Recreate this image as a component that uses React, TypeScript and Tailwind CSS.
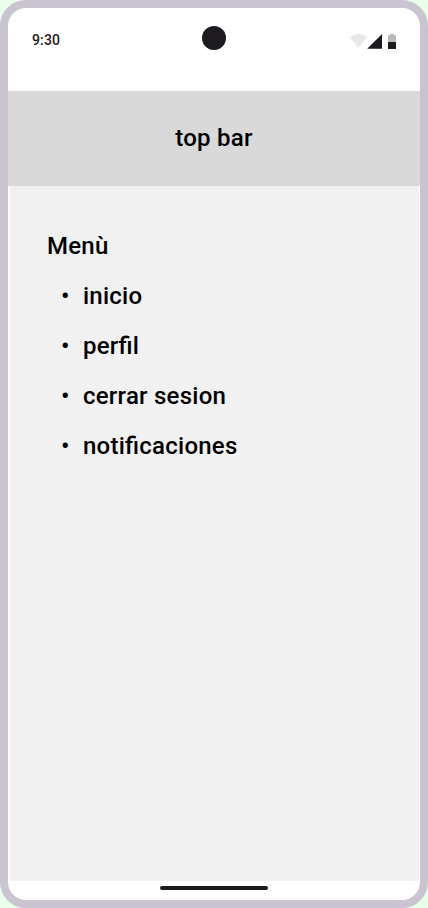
const items = ["inicio", "perfil", "cerrar sesion", "notificaciones"];

function StatusIcons() {
  return (
    <svg width="48" height="16" viewBox="0 0 48 16" className="block">
      <path d="M0 4.2C2.5 2 5.400 1 8.5 1S14.5 2 17 4.200L8.5 15Z" fill="#1d1b20" fillOpacity="0.1" />
      <path d="M17.200 15.700L32 1V15.700Z" fill="#1d1b20" />
      <path d="M40 1h4v1h1.200q.8 0 .8.8V9h-8V2.800q0-.8.8-.8H40Z" fill="#1d1b20" fillOpacity="0.3" />
      <path d="M38 9h8v6.500q0 .5-.5.5h-7q-.5 0-.5-.5Z" fill="#1d1b20" />
    </svg>
  );
}

export default function App() {
  return (
    <div className="h-[908px] w-[428px] overflow-hidden bg-[#eaffea] font-['Roboto',sans-serif]">
      <div className="flex h-full flex-col overflow-hidden rounded-[26px] border-8 border-[#cac4d0] bg-white">
        <header className="grid h-[83px] shrink-0 grid-cols-3 items-start px-6 pt-[18px]">
          <span className="pt-1 text-sm leading-5 font-medium tracking-[0.14px] text-[#1d1b20]">9:30</span>
          <span className="size-6 justify-self-center rounded-full bg-[#1d1b20]" />
          <span className="-mr-0.5 justify-self-end pt-[7px]">
            <StatusIcons />
          </span>
        </header>
        <div className="flex h-[95px] shrink-0 items-center justify-center bg-[#d9d9d9] pb-0.5 text-2xl font-medium tracking-[0.24px] text-black">
          top bar
        </div>
        <main className="mr-px ml-0.5 h-[695px] shrink-0 bg-[#f1f1f1] pt-[45px] pl-[37px] text-2xl leading-[30px] font-medium tracking-[0.24px] text-black [font-feature-settings:'liga'_1]">
          <h1>Menù</h1>
          <ul className="mt-5 flex flex-col gap-5">
            {items.map((item) => (
              <li key={item} className="flex">
                <span className="w-9 pl-[14px]">•</span>
                <span>{item}</span>
              </li>
            ))}
          </ul>
        </main>
        <footer className="flex justify-center pt-[5px]">
          <div className="h-1 w-[108px] rounded-full bg-[#1d1b20]" />
        </footer>
      </div>
    </div>
  );
}
